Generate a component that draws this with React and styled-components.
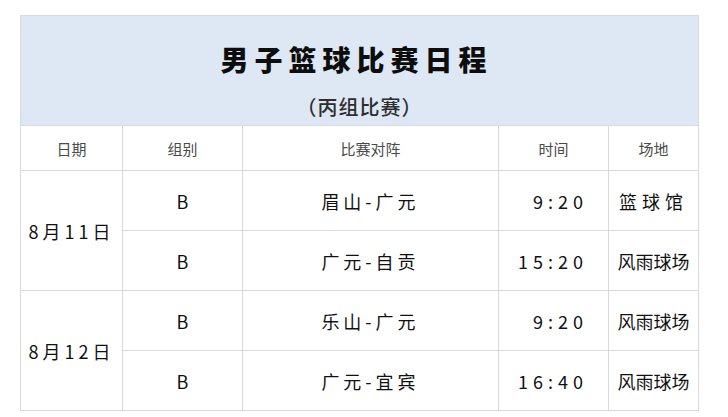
import React from 'react';
import styled, { createGlobalStyle } from 'styled-components';

const GlobalStyle = createGlobalStyle`
  html, body {
    margin: 0;
    padding: 0;
    background: #ffffff;
  }
  body {
    font-family: 'Noto Sans CJK SC', 'Noto Sans', sans-serif;
  }
`;

const Page = styled.div`
  width: 728px;
  height: 417px;
  padding: 15px 0 0 20px;
  box-sizing: border-box;
  overflow: hidden;
`;

const Table = styled.table`
  width: 678px;
  border-collapse: collapse;
  table-layout: fixed;
  color: #1a1a1a;
`;

const Banner = styled.th`
  height: 110px;
  padding: 29px 0 0 0;
  box-sizing: border-box;
  vertical-align: top;
  background: #dde8f4;
  border: 1px solid #d6dbe0;
  font-weight: normal;
`;

const Title = styled.div`
  font-size: 28px;
  font-weight: 900;
  letter-spacing: 6px;
  padding-right: 6px;
  line-height: 1;
  color: #0d0d0d;
`;

const SubTitle = styled.div`
  margin-top: 24px;
  font-size: 20px;
  font-weight: 500;
  letter-spacing: 1px;
  line-height: 1;
  color: #2e2e2e;
`;

const HeadCell = styled.th`
  height: 44px;
  padding: 0;
  border: 1px solid #d9d9d9;
  font-size: 15px;
  font-weight: normal;
  color: #4a4a4a;
  text-align: center;
`;

const Cell = styled.td`
  height: 59px;
  padding: 0 ${(p) => (p.$right ? '20px' : '0')} 0 0;
  border: 1px solid #d9d9d9;
  font-size: 18px;
  letter-spacing: ${(p) => p.$spacing || '0px'};
  text-align: ${(p) => (p.$right ? 'right' : 'center')};
  vertical-align: middle;
  color: #111111;
  white-space: nowrap;
`;

const rows = [
  { date: '8月11日', group: 'B', match: '眉山-广元', time: '9:20', place: '篮球馆' },
  { group: 'B', match: '广元-自贡', time: '15:20', place: '风雨球场' },
  { date: '8月12日', group: 'B', match: '乐山-广元', time: '9:20', place: '风雨球场' },
  { group: 'B', match: '广元-宜宾', time: '16:40', place: '风雨球场' },
];

const App = () => {
  return (
    <>
      <GlobalStyle />
      <Page>
        <Table>
          <colgroup>
            <col style={{ width: '102px' }} />
            <col style={{ width: '120px' }} />
            <col style={{ width: '256px' }} />
            <col style={{ width: '110px' }} />
            <col style={{ width: '90px' }} />
          </colgroup>
          <thead>
            <tr>
              <Banner colSpan={5}>
                <Title>男子篮球比赛日程</Title>
                <SubTitle>（丙组比赛）</SubTitle>
              </Banner>
            </tr>
            <tr>
              <HeadCell>日期</HeadCell>
              <HeadCell>组别</HeadCell>
              <HeadCell>比赛对阵</HeadCell>
              <HeadCell>时间</HeadCell>
              <HeadCell>场地</HeadCell>
            </tr>
          </thead>
          <tbody>
            {rows.map((row, i) => (
              <tr key={i}>
                {row.date ? (
                  <Cell rowSpan={2} $spacing="4px">
                    {row.date}
                  </Cell>
                ) : null}
                <Cell>{row.group}</Cell>
                <Cell $spacing="4px">{row.match}</Cell>
                <Cell $right $spacing="5px">
                  {row.time}
                </Cell>
                <Cell $spacing={row.place.length === 3 ? '5px' : '0px'}>
                  {row.place}
                </Cell>
              </tr>
            ))}
          </tbody>
        </Table>
      </Page>
    </>
  );
};

export default App;
